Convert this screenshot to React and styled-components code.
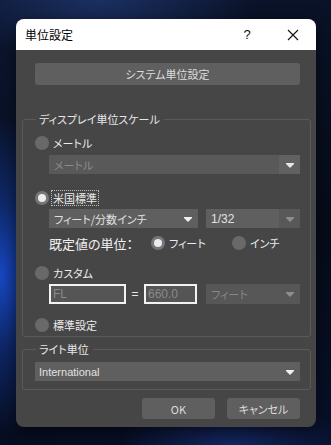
import React from "react";
import styled, { createGlobalStyle } from "styled-components";

const GlobalStyle = createGlobalStyle`
  html, body {
    margin: 0;
    padding: 0;
    height: 100%;
  }
  body {
    font-family: "Noto Sans CJK JP", "Noto Sans", sans-serif;
    background-color: #070d1c;
    background-image:
      radial-gradient(ellipse 90px 160px at 0% 62%, #1748c4 0%, rgba(23, 72, 196, 0.45) 45%, transparent 100%),
      radial-gradient(ellipse 220px 90px at 30% 0%, rgba(40, 70, 140, 0.55) 0%, transparent 70%),
      radial-gradient(ellipse 140px 60px at 70% 100%, rgba(30, 60, 150, 0.5) 0%, transparent 80%),
      linear-gradient(160deg, #0c1630 0%, #060b18 60%, #08102a 100%);
    overflow: hidden;
  }
`;

const Page = styled.div`
  padding: 19px 15px 0 16px;
`;

const Dialog = styled.div`
  width: 300px;
  border-radius: 8px;
  overflow: hidden;
  background: #464646;
  box-shadow: 0 4px 16px rgba(0, 0, 0, 0.5);
`;

const TitleBar = styled.div`
  height: 31px;
  background: #ffffff;
  display: flex;
  align-items: center;
  padding-left: 9px;
`;

const Title = styled.div`
  flex: 1;
  font-size: 12px;
  color: #000;
  font-feature-settings: "palt";
`;

const TitleButton = styled.div`
  width: 46px;
  height: 31px;
  display: flex;
  align-items: center;
  justify-content: center;
  font-family: "Liberation Sans", sans-serif;
  font-size: 13px;
  color: #111;
`;

const Body = styled.div`
  padding: 13px 5px 8px 6px;
  display: flex;
  flex-direction: column;
`;

const Button = styled.div`
  height: ${(p) => p.$h || 21}px;
  width: ${(p) => (p.$w ? p.$w + "px" : "auto")};
  background: #5f5f5f;
  border-radius: 3px;
  display: flex;
  align-items: center;
  justify-content: center;
  font-size: 11px;
  color: #dcdcdc;
  font-feature-settings: "palt";
`;

const SystemButton = styled(Button)`
  margin: 0 11px 0 13px;
`;

const Group = styled.fieldset`
  margin: ${(p) => p.$top}px 0 0 0;
  padding: 0 10px ${(p) => p.$bottom}px 12px;
  border: 1px solid #5a5a5a;
  border-radius: 3px;
  min-width: 0;
`;

const Legend = styled.legend`
  margin-left: 1px;
  padding: 0 4px 0 3px;
  font-size: 11px;
  line-height: 14px;
  color: #e6e6e6;
  font-feature-settings: "palt";
`;

const Row = styled.div`
  display: flex;
  align-items: center;
  height: ${(p) => p.$h || 16}px;
  margin-top: ${(p) => p.$top || 0}px;
  margin-left: ${(p) => p.$indent || 0}px;
`;

const RadioCircle = styled.div`
  width: 14px;
  height: 14px;
  border-radius: 50%;
  background: ${(p) => (p.$checked ? "#767676" : "#696969")};
  display: flex;
  align-items: center;
  justify-content: center;
  flex-shrink: 0;
  &::after {
    content: "";
    display: ${(p) => (p.$checked ? "block" : "none")};
    width: 8px;
    height: 8px;
    border-radius: 50%;
    background: #ececec;
  }
`;

const RadioLabel = styled.span`
  margin-left: 2px;
  font-size: 11px;
  color: #ececec;
  font-feature-settings: "palt";
  line-height: 14px;
  padding: 0 1px;
  border: 1px ${(p) => (p.$focus ? "dotted #bdbdbd" : "solid transparent")};
`;

const Select = styled.div`
  height: 19px;
  width: ${(p) => (p.$w ? p.$w + "px" : "auto")};
  flex: ${(p) => (p.$w ? "none" : 1)};
  background: ${(p) => p.$bg || "#5f5f5f"};
  display: flex;
  align-items: stretch;
  color: ${(p) => p.$color || "#e2e2e2"};
  font-size: ${(p) => p.$size || 11}px;
`;

const SelectText = styled.div`
  flex: 1;
  display: flex;
  align-items: center;
  padding-left: ${(p) => p.$pad || 5}px;
  font-family: ${(p) =>
    p.$latin ? '"Liberation Sans", sans-serif' : '"Noto Sans CJK JP", sans-serif'};
  font-feature-settings: "palt";
  white-space: nowrap;
`;

const ArrowBox = styled.div`
  width: 21px;
  background: ${(p) => p.$bg || "transparent"};
  display: flex;
  align-items: center;
  justify-content: center;
`;

const Arrow = styled.div`
  width: 0;
  height: 0;
  border-left: 4px solid transparent;
  border-right: 4px solid transparent;
  border-top: 4px solid ${(p) => p.$color || "#f0f0f0"};
  position: relative;
  top: 1px;
  &::before {
    content: "";
    position: absolute;
    left: -4px;
    top: -5px;
    width: 8px;
    height: 1px;
    background: ${(p) => p.$color || "#f0f0f0"};
  }
`;

const DefaultLabel = styled.div`
  width: 102px;
  font-size: 13px;
  color: #f0f0f0;
  font-feature-settings: "palt";
`;

const RadioOption = styled.div`
  width: ${(p) => (p.$w ? p.$w + "px" : "auto")};
  display: flex;
  align-items: center;
`;

const Input = styled.div`
  width: ${(p) => p.$w}px;
  height: 20px;
  box-sizing: border-box;
  border: 2px solid #f2f2f2;
  background: #555555;
  display: flex;
  align-items: center;
  padding-left: 2px;
  font-family: "Liberation Sans", sans-serif;
  font-size: 12px;
  color: #8a8a8a;
`;

const Equals = styled.div`
  width: 18px;
  text-align: center;
  font-family: "Liberation Sans", sans-serif;
  font-size: 12px;
  color: #e6e6e6;
`;

const Footer = styled.div`
  display: flex;
  justify-content: flex-end;
  gap: 12px;
  margin: 8px 11px 0 0;
`;

const CloseIcon = () => (
  <svg width="12" height="12" viewBox="0 0 12 12">
    <path d="M1 1 L11 11 M11 1 L1 11" stroke="#111" strokeWidth="1.1" fill="none" />
  </svg>
);

const Radio = ({ checked, label, focus }) => (
  <>
    <RadioCircle $checked={checked} />
    <RadioLabel $focus={focus}>{label}</RadioLabel>
  </>
);

export default function App() {
  return (
    <Page>
      <GlobalStyle />
      <Dialog>
        <TitleBar>
          <Title>単位設定</Title>
          <TitleButton>?</TitleButton>
          <TitleButton>
            <CloseIcon />
          </TitleButton>
        </TitleBar>
        <Body>
          <SystemButton $h={22}>システム単位設定</SystemButton>

          <Group $top={27} $bottom={3}>
            <Legend>ディスプレイ単位スケール</Legend>
            <Row $top={9}>
              <Radio label="メートル" />
            </Row>
            <Row $top={4} $h={19} $indent={14}>
              <Select $bg="#595959" $color="#8c8c8c">
                <SelectText>メートル</SelectText>
                <ArrowBox $bg="#616161">
                  <Arrow $color="#e6e6e6" />
                </ArrowBox>
              </Select>
            </Row>
            <Row $top={16}>
              <Radio checked focus label="米国標準" />
            </Row>
            <Row $top={3} $h={19} $indent={14}>
              <Select $w={149}>
                <SelectText>フィート/分数インチ</SelectText>
                <ArrowBox>
                  <Arrow />
                </ArrowBox>
              </Select>
              <div style={{ width: 8 }} />
              <Select $size={12}>
                <SelectText $latin>1/32</SelectText>
                <ArrowBox $bg="#585858">
                  <Arrow $color="#8e8e8e" />
                </ArrowBox>
              </Select>
            </Row>
            <Row $top={7} $indent={14}>
              <DefaultLabel>既定値の単位：</DefaultLabel>
              <RadioOption $w={81}>
                <Radio checked label="フィート" />
              </RadioOption>
              <RadioOption>
                <Radio label="インチ" />
              </RadioOption>
            </Row>
            <Row $top={14}>
              <Radio label="カスタム" />
            </Row>
            <Row $top={3} $h={20} $indent={14}>
              <Input $w={77}>FL</Input>
              <Equals>=</Equals>
              <Input $w={53}>660.0</Input>
              <div style={{ width: 9 }} />
              <Select $bg="#575757" $color="#878787" style={{ height: 20 }}>
                <SelectText>フィート</SelectText>
                <ArrowBox>
                  <Arrow $color="#8e8e8e" />
                </ArrowBox>
              </Select>
            </Row>
            <Row $top={13}>
              <Radio label="標準設定" />
            </Row>
          </Group>

          <Group $top={5} $bottom={8}>
            <Legend>ライト単位</Legend>
            <Row $top={6} $h={19}>
              <Select>
                <SelectText $latin $pad={4}>International</SelectText>
                <ArrowBox>
                  <Arrow />
                </ArrowBox>
              </Select>
            </Row>
          </Group>

          <Footer>
            <Button $w={73}>OK</Button>
            <Button $w={73}>キャンセル</Button>
          </Footer>
        </Body>
      </Dialog>
    </Page>
  );
}
